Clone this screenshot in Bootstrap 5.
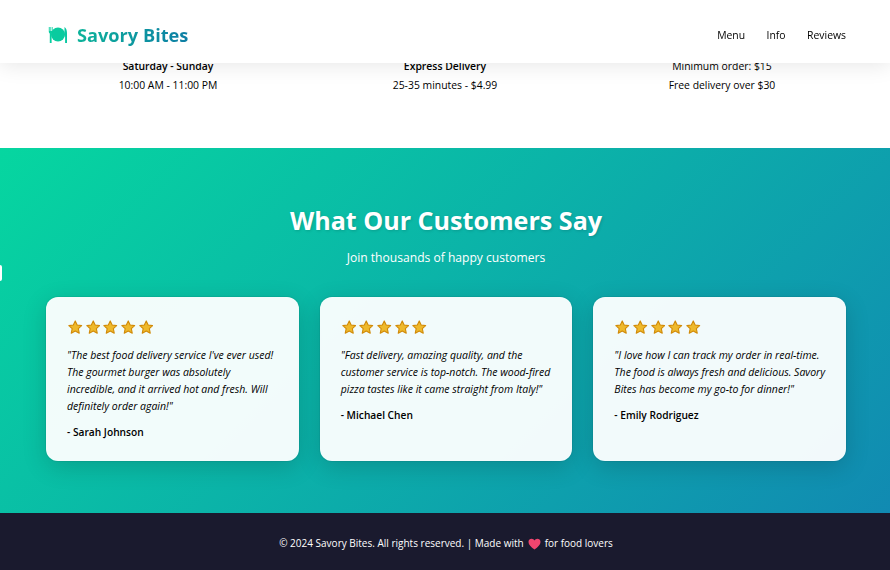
<!DOCTYPE html>
<html lang="en">
<head>
    <meta charset="UTF-8">
    <meta name="viewport" content="width=device-width, initial-scale=1.0">
    <link href="https://cdn.jsdelivr.net/npm/bootstrap@5.3.0/dist/css/bootstrap.min.css" rel="stylesheet">
    <title>Savory Bites</title>
    <style>
        body {
            font-family: "Open Sans", "Liberation Sans", sans-serif;
            color: #000;
            overflow: hidden;
        }

        .site-nav {
            height: 63px;
            padding: 8px 44px 0 48px;
            background-color: #fff;
            box-shadow: 0 2px 20px rgba(0, 0, 0, 0.1);
        }

        .brand-name {
            margin-left: 1px;
            font-size: 18.2px;
            font-weight: 700;
            background: linear-gradient(90deg, #0db39a, #0d7ea5);
            -webkit-background-clip: text;
            background-clip: text;
            color: transparent;
        }

        .site-links {
            gap: 21.500px;
            font-size: 10.4px;
            font-weight: 500;
        }

        .site-links a {
            color: #000;
            text-decoration: none;
        }

        .info-strip {
            height: 148px;
            padding-top: 57px;
            font-size: 10.4px;
            line-height: 19px;
        }

        .info-col {
            width: 277px;
        }

        .reviews {
            height: 365px;
            padding-top: 54px;
            padding-left: 2px;
            background: linear-gradient(135deg, #06d6a0, #118ab2);
            color: #fff;
        }

        .reviews h2 {
            font-size: 25.1px;
            font-weight: 700;
            line-height: 36px;
            margin-bottom: 10px;
            text-shadow: 1px 1px 3px rgba(0, 0, 0, 0.15);
        }

        .reviews-sub {
            font-size: 12.1px;
            line-height: 20px;
            margin-bottom: 29px;
        }

        .review-row {
            width: 800px;
            gap: 21px;
            align-items: stretch;
        }

        .review-box {
            flex: 1 1 0;
            height: 164px;
            padding: 23px 18px 23px 21px;
            background-color: rgba(255, 255, 255, 0.95);
            border-radius: 12px;
            box-shadow: 0 0 0 1px rgba(0, 0, 0, 0.05), 0 6px 24px rgba(0, 0, 0, 0.16);
            color: #000;
        }

        .star-row {
            gap: 3.200px;
            height: 17px;
            margin-bottom: 10px;
            padding-left: 1px;
        }

        .review-text {
            font-size: 10.5px;
            font-style: italic;
            line-height: 17px;
            margin-bottom: 9px;
        }

        .review-name {
            font-size: 10.2px;
            font-weight: 600;
            line-height: 17px;
        }

        .site-foot {
            height: 57px;
            padding: 4px 0 0 2px;
            background-color: #1a1a2e;
            color: #fff;
            font-size: 10px;
        }

        .edge-tab {
            position: absolute;
            left: 0;
            top: 265px;
            width: 2px;
            height: 16px;
            background-color: #fff;
            border-radius: 0 2px 2px 0;
        }
    </style>
</head>
<body>

<nav class="navbar fixed-top site-nav d-flex justify-content-between align-items-center">
    <div class="d-flex align-items-center gap-2">
        <svg width="20" height="18" viewBox="0 0 20 18">
            <circle cx="10" cy="8.500" r="7" fill="#0acb9f"/>
            <path d="M.8 1v4.500c0 1 .5 1.600 1 2V17h1.800V7.500c.5-.4 1-1 1-2V1h-.8v4H3.100V1h-.7v4H1.700V1z" fill="#08cfa0"/>
            <path d="M16.500 1c1.500 1 2.500 3 2.500 6v10h-1.900v-6.500h-.6z" fill="#0ac7a2"/>
        </svg>
        <span class="brand-name">Savory Bites</span>
    </div>
    <div class="site-links d-flex">
        <a href="#">Menu</a>
        <a href="#">Info</a>
        <a href="#">Reviews</a>
    </div>
</nav>

<section class="info-strip d-flex justify-content-center text-center">
    <div class="info-col">
        <div class="fw-semibold">Saturday - Sunday</div>
        <div>10:00 AM - 11:00 PM</div>
    </div>
    <div class="info-col">
        <div class="fw-semibold">Express Delivery</div>
        <div>25-35 minutes - $4.99</div>
    </div>
    <div class="info-col">
        <div>Minimum order: $15</div>
        <div>Free delivery over $30</div>
    </div>
</section>

<section class="reviews text-center">
    <h2>What Our Customers Say</h2>
    <p class="reviews-sub">Join thousands of happy customers</p>
    <div class="review-row d-flex mx-auto text-start">
        <div class="review-box">
            <div class="star-row d-flex" data-stars></div>
            <p class="review-text">"The best food delivery service I've ever used! The gourmet burger was absolutely incredible, and it arrived hot and fresh. Will definitely order again!"</p>
            <div class="review-name">- Sarah Johnson</div>
        </div>
        <div class="review-box">
            <div class="star-row d-flex" data-stars></div>
            <p class="review-text">"Fast delivery, amazing quality, and the customer service is top-notch. The wood-fired pizza tastes like it came straight from Italy!"</p>
            <div class="review-name">- Michael Chen</div>
        </div>
        <div class="review-box">
            <div class="star-row d-flex" data-stars></div>
            <p class="review-text">"I love how I can track my order in real-time. The food is always fresh and delicious. Savory Bites has become my go-to for dinner!"</p>
            <div class="review-name">- Emily Rodriguez</div>
        </div>
    </div>
</section>

<footer class="site-foot d-flex justify-content-center align-items-center gap-1">
    <span>© 2024 Savory Bites. All rights reserved. | Made with</span>
    <svg width="13" height="12" viewBox="0 0 13 12">
        <path d="M6.500 11.500C3 9 .5 6.800.5 4 .5 2 2 .8 3.600.8c1.300 0 2.300.7 2.900 1.800C7.100 1.500 8.100.8 9.400.8 11 .8 12.500 2 12.500 4c0 2.800-2.500 5-6 7.500z" fill="#f0456f"/>
    </svg>
    <span>for food lovers</span>
</footer>

<div class="edge-tab"></div>

<script>
    // five stars per review, same shape each time
    const star = '<svg width="14.500" height="14.500" viewBox="0 0 24 24"><path d="M12 1.500l3.200 6.900 7.400.9-5.500 5.100 1.500 7.400L12 18.100l-6.600 3.700 1.500-7.400-5.500-5.100 7.400-.9z" fill="#eeb92c" stroke="#d18a08" stroke-width="1.800" stroke-linejoin="round"/></svg>';
    document.querySelectorAll('[data-stars]').forEach(row => {
        row.innerHTML = star.repeat(5);
    });
</script>
<script src="https://cdn.jsdelivr.net/npm/bootstrap@5.3.0/dist/js/bootstrap.bundle.min.js"></script>
</body>
</html>
